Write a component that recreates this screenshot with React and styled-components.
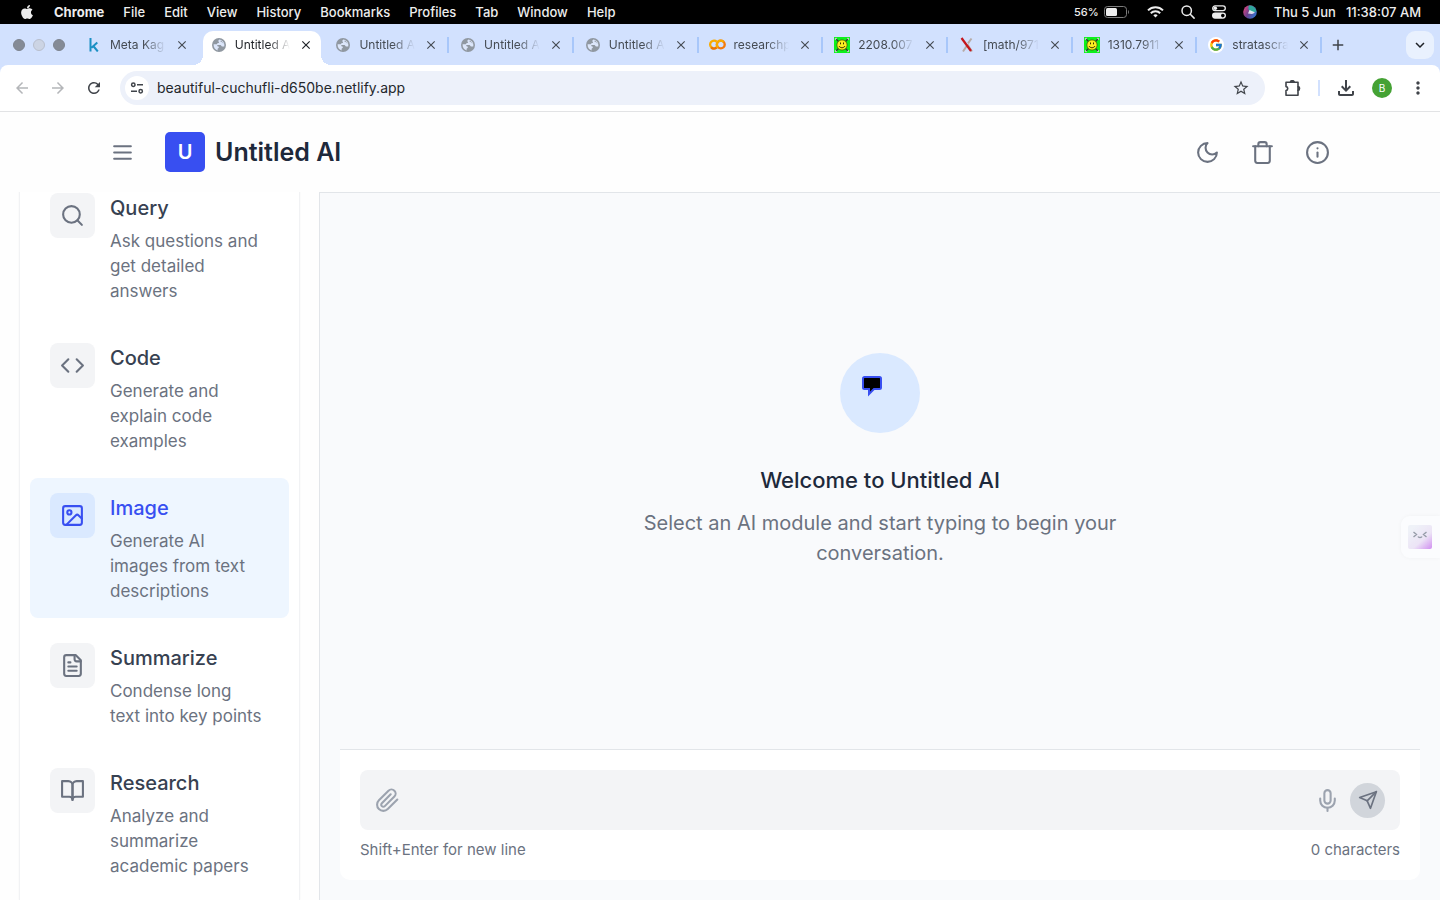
import React, { useState } from "react";
import styled, { createGlobalStyle, css } from "styled-components";
import { FiInfo, FiSearch, FiCode, FiBookOpen, FiPaperclip, FiSend } from "react-icons/fi";
import { Trash, Image, Mic } from "lucide-react";
import { FaApple } from "react-icons/fa";
import { FcGoogle } from "react-icons/fc";
import {
  MdArrowBack,
  MdArrowForward,
  MdRefresh,
  MdStarBorder,
  MdMoreVert,
  MdClose,
  MdAdd,
  MdKeyboardArrowDown,
  MdOutlineFileDownload,
} from "react-icons/md";

const GlobalStyle = createGlobalStyle`
  *, *::before, *::after { box-sizing: border-box; }
  body {
    margin: 0;
    background: #f9fafc;
    font-family: Inter, "Liberation Sans", sans-serif;
  }
  button {
    font: inherit;
    color: inherit;
    border: 0;
    padding: 0;
    background: none;
    cursor: pointer;
  }
  svg { display: block; flex: none; }
`;

const Screen = styled.div`
  display: flex;
  flex-direction: column;
  height: 100vh;
  overflow: hidden;
`;

/* ---------- system menu bar ---------- */

const MenuBar = styled.div`
  display: flex;
  align-items: center;
  flex: none;
  height: 24px;
  padding: 0 19px;
  background: #000;
  color: #ededed;
  font-size: 13px;
  font-weight: 500;
  white-space: nowrap;
`;

const MenuList = styled.nav`
  display: flex;
  align-items: center;
  gap: 19px;
  flex: 1;
`;

const MenuButton = styled.button`
  font-weight: ${(p) => (p.$strong ? 700 : 500)};
`;

const StatusList = styled.div`
  display: flex;
  align-items: center;
  gap: 17px;
`;

const BatteryStatus = styled.div`
  display: flex;
  align-items: center;
  gap: 5px;
  font-size: 11px;
`;

const Clock = styled.time`
  display: flex;
  gap: 10px;
`;

/* ---------- browser tabs ---------- */

const TabStrip = styled.div`
  display: flex;
  align-items: center;
  flex: none;
  height: 41px;
  padding: 0 6px 0 13px;
  background: #d2e1fe;
`;

const WindowControls = styled.div`
  display: flex;
  gap: 8px;
  flex: none;
  width: 62px;
`;

const WindowDot = styled.button`
  width: 12px;
  height: 12px;
  border-radius: 50%;
  background: ${(p) => (p.$pale ? "#ccd4e4" : "#858b96")};
  border: 1px solid ${(p) => (p.$pale ? "#b9bfcd" : "#7e848f")};
`;

const TabList = styled.div`
  display: flex;
  flex: 1;
  min-width: 0;
  align-self: stretch;
`;

const Tab = styled.div`
  position: relative;
  display: flex;
  flex: 1 1 0;
  min-width: 0;
  align-items: center;
  margin-top: 7px;
  padding: 0 10px 7px 11px;
  color: #454b53;
  ${(p) =>
    p.$divider &&
    css`
      &::after {
        content: "";
        position: absolute;
        right: 0;
        top: 6px;
        width: 2px;
        height: 16px;
        background: #a8c7fa;
      }
    `}
  ${(p) =>
    p.$active &&
    css`
      color: #1f2227;
      &::before {
        content: "";
        position: absolute;
        inset: 0 3px;
        border-radius: 10px 10px 0 0;
        background: #fff;
      }
    `}
`;

const TabFoot = styled.span`
  position: absolute;
  bottom: 0;
  width: 10px;
  height: 10px;
  ${(p) =>
    p.$side === "left"
      ? css`
          left: -7px;
          background: radial-gradient(circle at 0 0, #d2e1fe 10px, #fff 10px);
        `
      : css`
          right: -7px;
          background: radial-gradient(circle at 100% 0, #d2e1fe 10px, #fff 10px);
        `}
`;

const Favicon = styled.span`
  position: relative;
  display: flex;
  width: 16px;
  flex: none;
  justify-content: center;
`;

const TabTitle = styled.span`
  position: relative;
  flex: 1;
  min-width: 0;
  margin: 0 8px;
  overflow: hidden;
  white-space: nowrap;
  font-size: 12px;
  line-height: 20px;
  mask-image: linear-gradient(90deg, #000 60%, transparent 100%);
`;

const TabClose = styled.button`
  position: relative;
  display: grid;
  place-items: center;
  flex: none;
  width: 16px;
  height: 16px;
`;

const NewTab = styled.button`
  display: grid;
  place-items: center;
  flex: none;
  width: 32px;
  height: 28px;
  margin-right: 52px;
  color: #3f4349;
`;

const TabSearch = styled.button`
  display: grid;
  place-items: center;
  flex: none;
  width: 28px;
  height: 28px;
  border-radius: 9px;
  background: #e9f1fe;
  color: #1f2227;
`;

/* ---------- browser toolbar ---------- */

const ToolbarBack = styled.div`
  flex: none;
  background: #d2e1fe;
`;

const Toolbar = styled.div`
  display: flex;
  align-items: center;
  height: 47px;
  padding: 0 13px;
  border-bottom: 1px solid #e2e3e5;
  border-radius: 8px 8px 0 0;
  background: #fff;
  color: #40444a;
`;

const NavButtons = styled.div`
  display: flex;
  gap: 18px;
  flex: none;
  width: 107px;
`;

const ToolButton = styled.button`
  display: grid;
  place-content: center;
  flex: none;
  width: 18px;
  height: 18px;
  color: ${(p) => (p.$muted ? "#b4b6b9" : "inherit")};
`;

const AddressBar = styled.div`
  display: flex;
  align-items: center;
  flex: 1;
  min-width: 0;
  height: 34px;
  padding: 0 15px 0 5px;
  border-radius: 17px;
  background: #edf1fa;
`;

const SiteInfo = styled.button`
  display: grid;
  place-items: center;
  flex: none;
  width: 24px;
  height: 24px;
  border-radius: 50%;
  background: #fff;
`;

const AddressInput = styled.input`
  flex: 1;
  min-width: 0;
  margin: 0 8px;
  padding: 0;
  border: 0;
  outline: 0;
  background: none;
  color: #24272c;
  font: 400 14px/20px Inter, "Liberation Sans", sans-serif;
`;

const ToolActions = styled.div`
  display: flex;
  align-items: center;
  gap: 17px;
  padding-left: 18px;
`;

const ToolDivider = styled.span`
  width: 2px;
  height: 16px;
  background: #d2e1fe;
`;

const Avatar = styled.button`
  width: 20px;
  height: 20px;
  border-radius: 50%;
  background: #45a234;
  color: #fff;
  font-size: 10px;
  line-height: 20px;
`;

/* ---------- app header ---------- */

const Header = styled.header`
  display: flex;
  align-items: center;
  flex: none;
  height: 80px;
  padding: 0 100px;
  background: #fefefe;
`;

const IconButton = styled.button`
  display: grid;
  place-items: center;
  width: 45px;
  height: 45px;
  color: #6b7280;
`;

const Brand = styled.div`
  display: flex;
  align-items: center;
  gap: 10px;
  flex: 1;
  margin-left: 20px;
`;

const BrandMark = styled.span`
  width: 40px;
  height: 40px;
  border-radius: 5px;
  background: #384ff1;
  color: #fff;
  font-size: 20px;
  font-weight: 600;
  line-height: 40px;
  text-align: center;
`;

const BrandName = styled.h1`
  margin: 0;
  color: #1e293b;
  font-size: 25px;
  font-weight: 600;
  line-height: 35px;
`;

const HeaderActions = styled.div`
  display: flex;
  gap: 10px;
`;

/* ---------- app body ---------- */

const Body = styled.div`
  display: flex;
  flex: 1;
  min-height: 0;
`;

const Sidebar = styled.aside`
  display: flex;
  flex-direction: column;
  flex: none;
  width: 319px;
  padding: 0 19px;
  overflow: hidden;
  background: #fefefe;
`;

const ModuleList = styled.nav`
  display: flex;
  flex-direction: column;
  flex: 1 0 auto;
  gap: 10px;
  margin-top: -14px;
  padding: 0 10px;
  border: solid #f1f2f4;
  border-width: 0 1px;
  box-shadow: 0 0 2px rgba(0, 0, 0, 0.04);
  background: #fff;
`;

const ModuleButton = styled.button`
  display: flex;
  align-items: flex-start;
  gap: 15px;
  padding: 15px 24px 14px 20px;
  border-radius: 8px;
  background: ${(p) => (p.$active ? "#eef6ff" : "transparent")};
  text-align: left;
`;

const ModuleIcon = styled.span`
  display: grid;
  place-items: center;
  flex: none;
  width: 45px;
  height: 45px;
  border-radius: 8px;
  background: ${(p) => (p.$active ? "#dae9ff" : "#f3f4f6")};
  color: ${(p) => (p.$active ? "#384ff1" : "#6b7280")};
`;

const ModuleText = styled.span`
  display: flex;
  flex-direction: column;
  gap: 6px;
`;

const ModuleName = styled.span`
  color: ${(p) => (p.$active ? "#384ff1" : "#374151")};
  font-size: 20px;
  font-weight: 500;
  line-height: 30px;
`;

const ModuleHint = styled.span`
  color: #6b7280;
  font-size: 17px;
  line-height: 25px;
`;

const Main = styled.main`
  display: flex;
  flex-direction: column;
  flex: 1;
  min-width: 0;
  padding: 0 20px 20px;
  border: solid #e2e5e9;
  border-width: 1px 0 0 1px;
  background: #f9fafc;
`;

const Welcome = styled.section`
  display: flex;
  flex-direction: column;
  align-items: center;
  justify-content: center;
  flex: 1;
  padding-bottom: 22px;
  text-align: center;
`;

const WelcomeBadge = styled.div`
  width: 80px;
  height: 80px;
  padding: 20px;
  border-radius: 50%;
  background: #dae9ff;
`;

const WelcomeTitle = styled.h2`
  margin: 30px 0 10px;
  color: #1e293b;
  font-size: 22px;
  font-weight: 500;
  line-height: 35px;
`;

const WelcomeText = styled.p`
  max-width: 500px;
  margin: 0;
  color: #6b7280;
  font-size: 20px;
  line-height: 30px;
`;

const Composer = styled.form`
  padding: 20px;
  border-top: 1px solid #e2e5e9;
  border-radius: 0 0 10px 10px;
  background: #fff;
`;

const InputRow = styled.div`
  display: flex;
  align-items: center;
  height: 60px;
  padding: 0 15px 0 5px;
  border-radius: 8px;
  background: #f3f4f6;
`;

const InputAction = styled.button`
  display: grid;
  place-items: center;
  width: 45px;
  height: 45px;
  color: #9ca3af;
`;

const MessageInput = styled.textarea`
  flex: 1;
  min-width: 0;
  height: 30px;
  padding: 0 10px;
  border: 0;
  outline: 0;
  resize: none;
  background: none;
  color: #1e293b;
  font: 400 20px/30px Inter, "Liberation Sans", sans-serif;
`;

const SendButton = styled.button`
  display: grid;
  place-items: center;
  width: 35px;
  height: 35px;
  border-radius: 50%;
  background: #d1d5db;
  color: #6b7280;
`;

const ComposerNotes = styled.div`
  display: flex;
  justify-content: space-between;
  margin-top: 10px;
  color: #6b7280;
  font-size: 15px;
  line-height: 20px;
`;

const Assistant = styled.button`
  position: fixed;
  right: 0;
  top: 516px;
  display: flex;
  align-items: center;
  width: 39px;
  height: 42px;
  padding-left: 7px;
  border-radius: 9px 0 0 9px;
  background: #fbfcfe;
  box-shadow: 0 0 4px rgba(0, 0, 0, 0.04);
`;

/* ---------- drawings ---------- */

const WifiIcon = () => (
  <svg width="17" height="12" viewBox="0 0 17 12" fill="none" stroke="#ededed" strokeWidth="2">
    <path d="M1 4.4a10.6 10.6 0 0 1 15 0" />
    <path d="M3.8 7.2a6.6 6.6 0 0 1 9.4 0" />
    <path d="M8.5 11.6 6.3 9.3a3.1 3.1 0 0 1 4.4 0z" fill="#ededed" stroke="none" />
  </svg>
);

const BatteryIcon = () => (
  <svg width="26" height="12" viewBox="0 0 26 12">
    <rect x=".5" y=".5" width="22" height="11" rx="3" fill="none" stroke="#7c7c7c" />
    <rect x="2" y="2" width="11" height="8" rx="1.5" fill="#ededed" />
    <path d="M24 4v4c1.3-.6 1.3-3.4 0-4z" fill="#7c7c7c" />
  </svg>
);

const SpotlightIcon = () => (
  <svg width="14" height="14" viewBox="0 0 14 14" fill="none" stroke="#ededed" strokeWidth="1.5" strokeLinecap="round">
    <circle cx="5.7" cy="5.7" r="4.7" />
    <path d="m9.3 9.3 3.8 3.8" />
  </svg>
);

const ControlCenterIcon = () => (
  <svg width="14" height="14" viewBox="0 0 14 14">
    <rect x=".7" y=".9" width="12.6" height="4.8" rx="2.4" fill="none" stroke="#ededed" strokeWidth="1.3" />
    <circle cx="3.3" cy="3.3" r="1.8" fill="#ededed" />
    <rect y="7.5" width="14" height="6.2" rx="3.1" fill="#ededed" />
    <circle cx="10.8" cy="10.6" r="1.8" fill="#000" />
  </svg>
);

const SiriIcon = () => (
  <svg width="14" height="14" viewBox="0 0 14 14">
    <defs>
      <linearGradient id="siri" x1="0" y1=".2" x2="1" y2=".8">
        <stop offset="0" stopColor="#e0457f" />
        <stop offset=".45" stopColor="#6a3f8c" />
        <stop offset="1" stopColor="#2d7ad8" />
      </linearGradient>
    </defs>
    <circle cx="7" cy="7" r="6.8" fill="url(#siri)" />
    <path d="M6 .6a6.6 6.6 0 0 1 7.4 6C10.5 7.5 8.5 6 7 7 6 5 4.5 3 6 .6z" fill="#2fa79c" />
    <path d="M5 8.5 6.5 5l3 1.2 2.5 1.6-3 1.2z" fill="#fff" opacity=".8" />
  </svg>
);

const GlobeIcon = () => (
  <svg width="14" height="14" viewBox="0 0 14 14">
    <circle cx="7" cy="7" r="7" fill="#9098a1" />
    <path d="M7.6 1.5c-1.3.7-1.7 1.6-.9 2.3.7.6.2 1.3-.7 1.3-.8 0-.7 1-1.3 1.200H1.6c-.3 3 1.5 5.3 4 6.100V11c0-.8 1.3-.9 1.3-1.8 0-.8-.8-1-1.6-1V7.100h3.1c.9 0 .8 1.5 1.8 1.5h2c.8-2.8-.8-6.100-4.6-7.100z" fill="#dce6fa" />
    <path d="M8.8 2.500c-.7 1 .2 1.5 1 1.6.2 1 1 1.3 1.8 1.1" fill="#9098a1" />
  </svg>
);

const KaggleIcon = () => (
  <svg width="10" height="14" viewBox="0 0 10 14" fill="none" stroke="#1b90c4" strokeWidth="2">
    <path d="M1.5 0v13.5M8.300 4.500 2.500 9.700M4.300 8l4.500 5.500" />
  </svg>
);

const ColabIcon = () => (
  <svg width="17" height="11" viewBox="0 0 17 11" fill="none" strokeWidth="2.4">
    <path d="M7.700 2.600a3.900 3.900 0 1 0 0 5.800" stroke="#f9ab00" />
    <path d="M2.200 8.300a3.900 3.900 0 0 0 5.500.1" stroke="#e8710a" />
    <circle cx="11.800" cy="5.500" r="3.900" stroke="#f37a0c" />
    <path d="M9 8.300a3.900 3.900 0 0 1 5.600-5.500" stroke="#f9ab00" />
  </svg>
);

const SmileyIcon = () => (
  <svg width="16" height="16" viewBox="0 0 16 16">
    <path fill="#0df01c" d="M0 0h16v16H0z" />
    <path d="m1.500 1.500 13 13m0-13-13 13" stroke="#303030" strokeWidth="1.300" />
    <path d="M1 2.500 2.500 1M13.500 1 15 2.500M1 13.500 2.500 15M13.500 15l1.500-1.500" stroke="#d9dfd9" strokeWidth="1.300" />
    <circle cx="8" cy="8" r="5.100" fill="#fbee20" stroke="#504b00" strokeWidth=".7" />
    <path d="M6.500 5.500v1.800M9.500 5.500v1.800M5 9c1.300 2.300 4.700 2.300 6 0" fill="none" stroke="#332f00" strokeWidth="1" />
  </svg>
);

const ArxivIcon = () => (
  <svg width="14" height="16" viewBox="0 0 14 16" fill="none">
    <path d="M11.500 1.500 8 6.300M7 8.500 3 14.500M7.500 7.500l4.500 7" stroke="#b7aca8" strokeWidth="2" />
    <path d="m1.500 1 9.500 13" stroke="#c4161c" strokeWidth="2.200" />
  </svg>
);

const GoogleBadge = styled.span`
  display: grid;
  place-items: center;
  flex: none;
  width: 16px;
  height: 16px;
  border-radius: 50%;
  background: #fff;
`;

const TuneIcon = () => (
  <svg width="14" height="12" viewBox="0 0 14 12" fill="none" stroke="#40444a" strokeWidth="1.5">
    <circle cx="3.3" cy="2.700" r="1.700" />
    <path d="M7 2.700h6M1 9.300h6" />
    <circle cx="10.700" cy="9.300" r="1.700" />
  </svg>
);

const ExtensionIcon = () => (
  <svg width="18" height="18" viewBox="0 0 18 18" fill="none" stroke="#40444a" strokeWidth="1.6" strokeLinejoin="round">
    <path d="M3 3.300h4.500a1.800 1.500 0 0 1 3.600 0H15v4.400a1.500 1.800 0 0 1 0 3.600v4.900H3v-4.600c2.300-.3 2.300-3.700 0-4z" />
    <path d="M7.700 3.200a1.700 1.700 0 0 1 3.300 0zM15 7.900a1.700 1.700 0 0 1 0 3.300z" fill="#40444a" />
  </svg>
);

const OutlineIcon = styled.svg.attrs({
  width: 25,
  height: 25,
  viewBox: "0 0 24 24",
  strokeWidth: 2,
})`
  fill: none;
  stroke: currentColor;
  stroke-linecap: round;
  stroke-linejoin: round;
`;

const MenuIcon = () => (
  <OutlineIcon>
    <path d="M4 6h16M4 12h16M4 18h16" />
  </OutlineIcon>
);

const MoonIcon = () => (
  <OutlineIcon>
    <path d="M12 3a6 6 0 0 0 9 9 9 9 0 1 1-9-9Z" />
  </OutlineIcon>
);

const DocumentIcon = () => (
  <OutlineIcon>
    <path d="M15 2H6a2 2 0 0 0-2 2v16a2 2 0 0 0 2 2h12a2 2 0 0 0 2-2V7Z" />
    <path d="M14 2v4a2 2 0 0 0 2 2h4M10 9H8M16 13H8M16 17H8" />
  </OutlineIcon>
);

const BubbleIcon = () => (
  <svg width="25" height="25" viewBox="0 0 25 25">
    <path d="M4.500 4h15a1.500 1.500 0 0 1 1.500 1.500v9a1.500 1.500 0 0 1-1.500 1.500H14l-5 5V16H4.500A1.500 1.500 0 0 1 3 14.500v-9A1.500 1.500 0 0 1 4.500 4z" fill="#000" stroke="#384ff1" strokeWidth="2" />
  </svg>
);

const AssistantFace = () => (
  <svg width="24" height="24" viewBox="0 0 24 24">
    <defs>
      <linearGradient id="face" x1=".2" y1=".1" x2="1" y2="1">
        <stop offset="0" stopColor="#eff2f8" />
        <stop offset=".55" stopColor="#ece4f6" />
        <stop offset="1" stopColor="#d08ef0" />
      </linearGradient>
    </defs>
    <rect width="24" height="24" rx="2" fill="url(#face)" />
    <path d="m5.500 7 3 2.500-3 2.500M18.500 7l-3 2.500 3 2.500M10 11.500c.5 1.300 3.500 1.300 4 0" fill="none" stroke="#969ca8" strokeWidth="1.400" />
  </svg>
);

/* ---------- data ---------- */

const MENUS = ["File", "Edit", "View", "History", "Bookmarks", "Profiles", "Tab", "Window", "Help"];

const TABS = [
  { title: "Meta Kag", icon: <KaggleIcon /> },
  { title: "Untitled A", icon: <GlobeIcon />, active: true },
  { title: "Untitled A", icon: <GlobeIcon />, divider: true },
  { title: "Untitled A", icon: <GlobeIcon />, divider: true },
  { title: "Untitled A", icon: <GlobeIcon />, divider: true },
  { title: "researchp", icon: <ColabIcon />, divider: true },
  { title: "2208.007", icon: <SmileyIcon />, divider: true },
  { title: "[math/971", icon: <ArxivIcon />, divider: true },
  { title: "1310.7911", icon: <SmileyIcon />, divider: true },
  { title: "stratascra", icon: <GoogleBadge><FcGoogle size={14} /></GoogleBadge>, divider: true },
];

const MODULES = [
  { name: "Query", hint: "Ask questions and get detailed answers", icon: <FiSearch size={25} /> },
  { name: "Code", hint: "Generate and explain code examples", icon: <FiCode size={25} /> },
  { name: "Image", hint: "Generate AI images from text descriptions", icon: <Image size={25} /> },
  { name: "Summarize", hint: "Condense long text into key points", icon: <DocumentIcon /> },
  { name: "Research", hint: "Analyze and summarize academic papers", icon: <FiBookOpen size={25} /> },
];

export default function App() {
  const [selected, setSelected] = useState("Image");
  const [message, setMessage] = useState("");

  return (
    <Screen>
      <GlobalStyle />
      <MenuBar>
        <MenuList aria-label="Menu bar">
          <FaApple size={16} />
          <MenuButton $strong>Chrome</MenuButton>
          {MENUS.map((name) => (
            <MenuButton key={name}>{name}</MenuButton>
          ))}
        </MenuList>
        <StatusList>
          <BatteryStatus>
            56%
            <BatteryIcon />
          </BatteryStatus>
          <WifiIcon />
          <SpotlightIcon />
          <ControlCenterIcon />
          <SiriIcon />
          <Clock>
            <span>Thu 5 Jun</span>
            <span>11:38:07 AM</span>
          </Clock>
        </StatusList>
      </MenuBar>

      <TabStrip>
        <WindowControls>
          <WindowDot aria-label="Close window" />
          <WindowDot aria-label="Minimise window" $pale />
          <WindowDot aria-label="Zoom window" />
        </WindowControls>
        <TabList>
          {TABS.map((tab, i) => (
            <Tab key={i} $active={tab.active} $divider={tab.divider}>
              {tab.active && <TabFoot $side="left" />}
              {tab.active && <TabFoot $side="right" />}
              <Favicon>{tab.icon}</Favicon>
              <TabTitle>{tab.title}</TabTitle>
              <TabClose aria-label="Close tab">
                <MdClose size={14} />
              </TabClose>
            </Tab>
          ))}
        </TabList>
        <NewTab aria-label="New tab">
          <MdAdd size={18} />
        </NewTab>
        <TabSearch aria-label="Search tabs">
          <MdKeyboardArrowDown size={18} />
        </TabSearch>
      </TabStrip>

      <ToolbarBack>
        <Toolbar>
          <NavButtons>
            <ToolButton aria-label="Back" $muted>
              <MdArrowBack size={18} />
            </ToolButton>
            <ToolButton aria-label="Forward" $muted>
              <MdArrowForward size={18} />
            </ToolButton>
            <ToolButton aria-label="Reload">
              <MdRefresh size={18} />
            </ToolButton>
          </NavButtons>
          <AddressBar>
            <SiteInfo aria-label="Site information">
              <TuneIcon />
            </SiteInfo>
            <AddressInput aria-label="Address" defaultValue="beautiful-cuchufli-d650be.netlify.app" />
            <ToolButton aria-label="Bookmark this page">
              <MdStarBorder size={18} />
            </ToolButton>
          </AddressBar>
          <ToolActions>
            <ToolButton aria-label="Extensions">
              <ExtensionIcon />
            </ToolButton>
            <ToolDivider />
            <ToolButton aria-label="Downloads">
              <MdOutlineFileDownload size={24} />
            </ToolButton>
            <Avatar aria-label="Profile">B</Avatar>
            <ToolButton aria-label="More">
              <MdMoreVert size={20} />
            </ToolButton>
          </ToolActions>
        </Toolbar>
      </ToolbarBack>

      <Header>
        <IconButton aria-label="Toggle sidebar">
          <MenuIcon />
        </IconButton>
        <Brand>
          <BrandMark>U</BrandMark>
          <BrandName>Untitled AI</BrandName>
        </Brand>
        <HeaderActions>
          <IconButton aria-label="Dark mode">
            <MoonIcon />
          </IconButton>
          <IconButton aria-label="Clear conversation">
            <Trash size={25} />
          </IconButton>
          <IconButton aria-label="About">
            <FiInfo size={25} />
          </IconButton>
        </HeaderActions>
      </Header>

      <Body>
        <Sidebar>
          <ModuleList aria-label="AI modules">
            {MODULES.map(({ name, hint, icon }) => {
              const active = name === selected;
              return (
                <ModuleButton key={name} $active={active} onClick={() => setSelected(name)}>
                  <ModuleIcon $active={active}>{icon}</ModuleIcon>
                  <ModuleText>
                    <ModuleName $active={active}>{name}</ModuleName>
                    <ModuleHint>{hint}</ModuleHint>
                  </ModuleText>
                </ModuleButton>
              );
            })}
          </ModuleList>
        </Sidebar>

        <Main>
          <Welcome>
            <WelcomeBadge>
              <BubbleIcon />
            </WelcomeBadge>
            <WelcomeTitle>Welcome to Untitled AI</WelcomeTitle>
            <WelcomeText>Select an AI module and start typing to begin your conversation.</WelcomeText>
          </Welcome>
          <Composer onSubmit={(e) => e.preventDefault()}>
            <InputRow>
              <InputAction type="button" aria-label="Attach a file">
                <FiPaperclip size={25} />
              </InputAction>
              <MessageInput
                aria-label="Message"
                rows={1}
                value={message}
                onChange={(e) => setMessage(e.target.value)}
              />
              <InputAction type="button" aria-label="Record voice">
                <Mic size={25} />
              </InputAction>
              <SendButton type="submit" aria-label="Send">
                <FiSend size={20} />
              </SendButton>
            </InputRow>
            <ComposerNotes>
              <span>Shift+Enter for new line</span>
              <span>{message.length} characters</span>
            </ComposerNotes>
          </Composer>
        </Main>
      </Body>

      <Assistant aria-label="Open assistant">
        <AssistantFace />
      </Assistant>
    </Screen>
  );
}
